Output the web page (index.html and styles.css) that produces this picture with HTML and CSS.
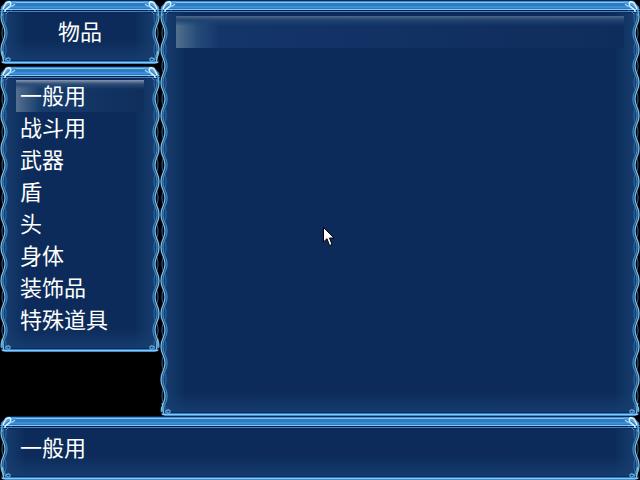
FILE: index.html
```html
<!DOCTYPE html>
<html lang="zh-CN">
<head>
    <meta charset="UTF-8">
    <title>物品</title>
    <link rel="stylesheet" href="styles.css">
</head>
<body>
    <svg class="defs" width="0" height="0">
        <defs>
            <symbol id="corner" viewBox="0 0 16 16">
                <path d="M0 0H7L1 7L0 12Z" fill="#000"/>
                <path d="M2 16C1 12 2 9 4 7C7 4 10 3 16 2" fill="none" stroke="#5eaee4" stroke-width="1.600"/>
                <path d="M5 12C4 9 8 9 10 6C12 3 10 1 8 2C5 3 4 6 3 9" fill="none" stroke="#dff1fa" stroke-width="1.500"/>
                <path d="M9 6C11 7 13 6 15 4" fill="none" stroke="#a9d8f2" stroke-width="1.200"/>
                <path d="M6 14C7 12 9 11 12 11" fill="none" stroke="#3c8ccb" stroke-width="1"/>
            </symbol>
            <symbol id="foot" viewBox="0 0 14 14">
                <path d="M0 8L2 13L5 14H0Z" fill="#000"/>
                <path d="M2 1C4 5 2 9 4 12" fill="none" stroke="#7cc0ea" stroke-width="1.300"/>
                <path d="M6 11C5 8 9 7 10 9C11 11 8 12 7 10" fill="none" stroke="#6bb2e2" stroke-width="1.100"/>
            </symbol>
        </defs>
    </svg>

    <div class="screen">
        <div class="top-row">
            <div class="left-col">
                <div class="window title-window">
                    <div class="frame"></div>
                    <svg class="corner tl"><use href="#corner"/></svg>
                    <svg class="corner tr"><use href="#corner"/></svg>
                    <svg class="foot bl"><use href="#foot"/></svg>
                    <svg class="foot br"><use href="#foot"/></svg>
                    <div class="title">物品</div>
                </div>
                <div class="window list-window">
                    <div class="frame"></div>
                    <svg class="corner tl"><use href="#corner"/></svg>
                    <svg class="corner tr"><use href="#corner"/></svg>
                    <svg class="foot bl"><use href="#foot"/></svg>
                    <svg class="foot br"><use href="#foot"/></svg>
                    <div class="menu">
                        <div class="menu-item selected">一般用</div>
                        <div class="menu-item">战斗用</div>
                        <div class="menu-item">武器</div>
                        <div class="menu-item">盾</div>
                        <div class="menu-item">头</div>
                        <div class="menu-item">身体</div>
                        <div class="menu-item">装饰品</div>
                        <div class="menu-item">特殊道具</div>
                    </div>
                </div>
            </div>
            <div class="window main-window">
                <div class="frame"></div>
                <svg class="corner tl"><use href="#corner"/></svg>
                <svg class="corner tr"><use href="#corner"/></svg>
                <svg class="foot bl"><use href="#foot"/></svg>
                <svg class="foot br"><use href="#foot"/></svg>
                <div class="main-head"></div>
            </div>
        </div>
        <div class="window help-window">
            <div class="frame"></div>
            <svg class="corner tl"><use href="#corner"/></svg>
            <svg class="corner tr"><use href="#corner"/></svg>
            <svg class="foot bl"><use href="#foot"/></svg>
            <svg class="foot br"><use href="#foot"/></svg>
            <div class="help-text">一般用</div>
        </div>

        <!-- 鼠标指针 -->
        <svg class="cursor" width="12" height="20" viewBox="0 0 12 20">
            <path d="M0.500 0.500V15L4 11.700L6.500 18.500L9 17.500L6.500 11H11Z" fill="#fff" stroke="#000" stroke-width="1"/>
        </svg>
    </div>
</body>
</html>
```
FILE: styles.css
```css
* {
    margin: 0;
    padding: 0;
    box-sizing: border-box;
}

body {
    background-color: #000;
    color: #fff;
    font-family: "Noto Sans CJK SC", "Liberation Sans", sans-serif;
    overflow: hidden;
}

.defs {
    display: block;
    height: 0;
}

.screen {
    width: 640px;
    height: 480px;
    position: relative;
    display: flex;
    flex-direction: column;
}

.top-row {
    height: 416px;
    display: flex;
}

.left-col {
    width: 160px;
    display: flex;
    flex-direction: column;
    gap: 2px;
}

.window {
    position: relative;
    padding: 16px 16px 8px;
    background:
        linear-gradient(0deg, #173f70 0, rgba(12, 43, 90, 0) 24px),
        linear-gradient(90deg, #173f70 4px, #0c2b5a 26px, #0c2b5a calc(100% - 26px), #173f70 calc(100% - 4px));
}

/* 窗口边框 */
.frame {
    position: absolute;
    inset: 0;
    pointer-events: none;
    background:
        linear-gradient(#062a5c 0 1px, #3f8fd0 1px 2px, #8cc6ec 2px 3px, #2c7cc4 3px 6px, #3a8ed8 6px 8px, #2c7cc4 8px 9px, #8cc6ec 9px 10px, #041c48 10px 11px, #3f86c4 11px 12px, #0c2b5a 12px 13px) top / 100% 13px no-repeat,
        linear-gradient(#0c2b5a 0 1px, #2c7cc4 1px 2px, #8cc6ec 2px 3px, #3f8fd0 3px 4px) bottom / 100% 4px no-repeat,
        url("data:image/svg+xml,%3Csvg xmlns='http://www.w3.org/2000/svg' width='10' height='33'%3E%3Cpath d='M0 0H5C5 8 1 8 1 16.500C1 25 5 25 5 33H0Z' fill='%23000'/%3E%3Cpath d='M2 0C2 8 6 8 6 16.500C6 25 2 25 2 33' fill='none' stroke='%23286ca8' stroke-width='1'/%3E%3Cpath d='M5 0C5 8 1 8 1 16.500C1 25 5 25 5 33' fill='none' stroke='%2375bdea' stroke-width='1.300'/%3E%3Cpath d='M7 0C7 8 3 8 3 16.500C3 25 7 25 7 33' fill='none' stroke='%234b96d2' stroke-width='1'/%3E%3C/svg%3E") left top / 10px 33px repeat-y,
        url("data:image/svg+xml,%3Csvg xmlns='http://www.w3.org/2000/svg' width='10' height='33'%3E%3Cg transform='matrix(-1 0 0 1 10 0)'%3E%3Cpath d='M0 0H5C5 8 1 8 1 16.500C1 25 5 25 5 33H0Z' fill='%23000'/%3E%3Cpath d='M2 0C2 8 6 8 6 16.500C6 25 2 25 2 33' fill='none' stroke='%23286ca8' stroke-width='1'/%3E%3Cpath d='M5 0C5 8 1 8 1 16.500C1 25 5 25 5 33' fill='none' stroke='%2375bdea' stroke-width='1.300'/%3E%3Cpath d='M7 0C7 8 3 8 3 16.500C3 25 7 25 7 33' fill='none' stroke='%234b96d2' stroke-width='1'/%3E%3C/g%3E%3C/svg%3E") right top / 10px 33px repeat-y;
}

.corner,
.foot {
    position: absolute;
    pointer-events: none;
}

.corner {
    width: 16px;
    height: 16px;
    top: 0;
}

.foot {
    width: 14px;
    height: 14px;
    bottom: 0;
}

.tl { left: 0; }
.tr { right: 0; transform: scaleX(-1); }
.bl { left: 0; }
.br { right: 0; transform: scaleX(-1); }

.title-window {
    height: 64px;
}

.title {
    font-size: 22px;
    line-height: 28px;
    text-align: center;
}

.list-window {
    height: 286px;
}

.menu {
    margin-top: -2px;
}

.menu-item {
    height: 32px;
    padding-left: 4px;
    font-size: 22px;
    line-height: 28px;
}

.menu-item.selected {
    background:
        linear-gradient(#8797ad 0, #2b4d78 4px, rgba(16, 47, 94, 0) 9px),
        linear-gradient(90deg, #56708f 0, #173c6c 24px, #0f2e5c 100%);
}

.main-window {
    width: 480px;
    height: 416px;
}

.main-head {
    height: 32px;
    background:
        linear-gradient(#4f6887 0, #1f4372 4px, rgba(22, 56, 104, 0) 10px),
        linear-gradient(90deg, #52708f 0, #234a78 22px, #14356a 44px, #0f2d5c 100%);
}

.help-window {
    height: 64px;
}

.help-text {
    font-size: 22px;
    line-height: 28px;
    padding-left: 4px;
}

.cursor {
    position: absolute;
    left: 323px;
    top: 227px;
}
```
